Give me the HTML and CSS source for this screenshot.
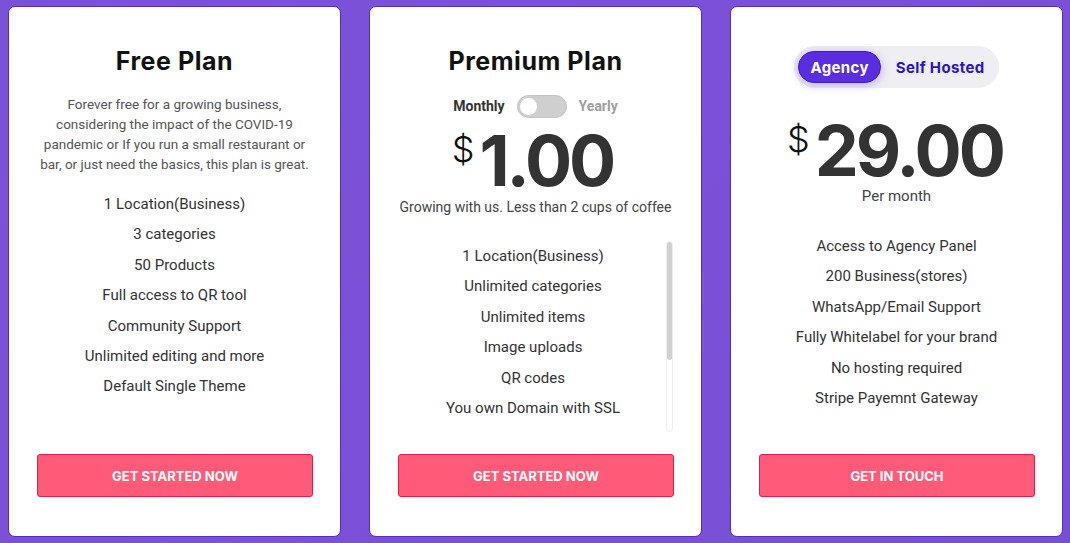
FILE: index.html
```html
<!DOCTYPE html>
<html lang="en">
<head>
<meta charset="utf-8">
<title>Pricing</title>
<link rel="stylesheet" href="styles.css">
</head>
<body>
<div class="plans">
  <section class="card">
    <h2 class="title">Free Plan</h2>
    <p class="desc">Forever free for a growing business, considering the impact of the COVID-19 pandemic or If you run a small restaurant or bar, or just need the basics, this plan is great.</p>
    <ul class="features free">
      <li>1 Location(Business)</li>
      <li>3 categories</li>
      <li>50 Products</li>
      <li>Full access to QR tool</li>
      <li>Community Support</li>
      <li>Unlimited editing and more</li>
      <li>Default Single Theme</li>
    </ul>
    <div class="foot"><a class="btn" href="#">GET STARTED NOW</a></div>
  </section>

  <section class="card">
    <h2 class="title">Premium Plan</h2>
    <div class="period">
      <span class="period-on">Monthly</span>
      <span class="switch"><span class="knob"></span></span>
      <span class="period-off">Yearly</span>
    </div>
    <div class="price premium"><span class="cur">$</span><span class="amt">1.00</span></div>
    <p class="sub">Growing with us. Less than 2 cups of coffee</p>
    <div class="scroll-wrap">
      <ul class="features scroll">
        <li>1 Location(Business)</li>
        <li>Unlimited categories</li>
        <li>Unlimited items</li>
        <li>Image uploads</li>
        <li>QR codes</li>
        <li>You own Domain with SSL</li>
      </ul>
      <span class="sbar"><span class="sthumb"></span></span>
    </div>
    <div class="foot"><a class="btn" href="#">GET STARTED NOW</a></div>
  </section>

  <section class="card">
    <div class="seg">
      <span class="seg-item active">Agency</span>
      <span class="seg-item">Self Hosted</span>
    </div>
    <div class="price agency"><span class="cur">$</span><span class="amt">29.00</span></div>
    <p class="sub month">Per month</p>
    <ul class="features agency-list">
      <li>Access to Agency Panel</li>
      <li>200 Business(stores)</li>
      <li>WhatsApp/Email Support</li>
      <li>Fully Whitelabel for your brand</li>
      <li>No hosting required</li>
      <li>Stripe Payemnt Gateway</li>
    </ul>
    <div class="foot"><a class="btn" href="#">GET IN TOUCH</a></div>
  </section>
</div>
</body>
</html>
```

FILE: styles.css
```css
* { box-sizing: border-box; }
html, body { margin: 0; height: 100%; }
body {
  background: linear-gradient(135deg, #7a52d8 0%, #7c50d8 50%, #7650d4 100%);
  font-family: Roboto, "Liberation Sans", sans-serif;
  color: #333;
  overflow: hidden;
}
.plans {
  display: flex;
  gap: 28px;
  padding: 6px 8px;
  height: 543px;
}
.card {
  width: 333px;
  height: 531px;
  background: #fff;
  border: 1px solid #4d2fc4;
  border-radius: 7px;
  display: flex;
  flex-direction: column;
  align-items: center;
  padding: 39px 28px 39px;
}
.title {
  margin: 0;
  font-family: Inter, "DejaVu Sans", sans-serif;
  font-weight: 700;
  font-size: 25px;
  line-height: 30px;
  color: #111;
  letter-spacing: 0.55px;
}
.desc {
  margin: 18px 0 0;
  font-size: 13.5px;
  line-height: 20px;
  color: #555;
  text-align: center;
}
.features {
  list-style: none;
  margin: 15px 0 0;
  padding: 0;
  text-align: center;
  font-size: 15px;
  color: #333;
}
.features li {
  line-height: 30.4px;
}
.foot {
  margin-top: auto;
  width: 100%;
}
.btn {
  display: flex;
  align-items: center;
  justify-content: center;
  height: 43px;
  width: 276px;
  margin: 0 auto;
  background: #ff5a78;
  border: 1px solid #e21c4c;
  border-radius: 3px;
  color: #fff;
  text-decoration: none;
  font-family: Inter, "DejaVu Sans", sans-serif;
  font-weight: 700;
  font-size: 13px;
}

/* premium */
.period {
  display: flex;
  align-items: center;
  gap: 12px;
  margin-top: 18px;
  height: 24px;
  font-size: 14px;
  font-weight: 700;
}
.period-on { color: #333; }
.period-off { color: #a0a0a0; }
.switch {
  position: relative;
  width: 50px;
  height: 23px;
  border-radius: 12px;
  background: #cfcfcf;
  border: 1px solid #c4c4c4;
}
.knob {
  position: absolute;
  left: 2px;
  top: 2px;
  width: 17px;
  height: 17px;
  border-radius: 50%;
  background: #fff;
}
.price {
  display: flex;
  align-items: flex-start;
  font-family: Inter, "DejaVu Sans", sans-serif;
  color: #333;
  height: 60px;
}
.price .cur {
  font-weight: 300;
  font-size: 36px;
  line-height: 36px;
  margin-top: 0;
  margin-right: 5px;
  color: #111;
}
.price .amt {
  font-weight: 700;
  font-size: 70px;
  line-height: 60px;
  letter-spacing: -3px;
}
.premium { margin-top: 13px; margin-left: -6px; }
.sub {
  margin: 6px 0 0;
  font-size: 14px;
  line-height: 20px;
  color: #444;
}
.scroll-wrap {
  position: relative;
  margin-top: 24px;
  width: 276px;
  height: 191px;
}
.scroll {
  margin: 0;
  height: 100%;
  overflow: hidden;
  padding-right: 5px;
}
.sbar {
  position: absolute;
  right: 1px;
  top: 0;
  width: 7px;
  height: 191px;
  border: 1px solid #eeeeee;
  border-radius: 4px;
  background: #fff;
}
.sthumb {
  position: absolute;
  left: 0;
  top: 0;
  width: 5px;
  height: 118px;
  border-radius: 3px;
  background: #d0d0d0;
}

/* agency */
.seg {
  display: flex;
  align-items: center;
  margin-top: 0;
  height: 42px;
  padding: 0 14px 0 4px;
  border-radius: 21px;
  background: #efeef2;
  font-family: Inter, "DejaVu Sans", sans-serif;
  font-weight: 700;
  font-size: 15px;
  letter-spacing: 0.35px;
  color: #2a14c8;
}
.seg-item { padding: 0 0 0 11px; }
.seg-item.active {
  height: 32px;
  display: flex;
  align-items: center;
  padding: 0 11px;
  margin-right: 4px;
  border-radius: 16px;
  background: #5a2ee0;
  color: #fff;
  border: 1px solid #3d1cc0;
  box-shadow: 0 2px 10px rgba(90, 46, 224, 0.35);
}
.agency { margin-top: 33px; margin-left: -3px; }
.month {
  margin-top: 5px;
  font-size: 15px;
  color: #444;
}
.agency-list { margin-top: 25px; }
```
